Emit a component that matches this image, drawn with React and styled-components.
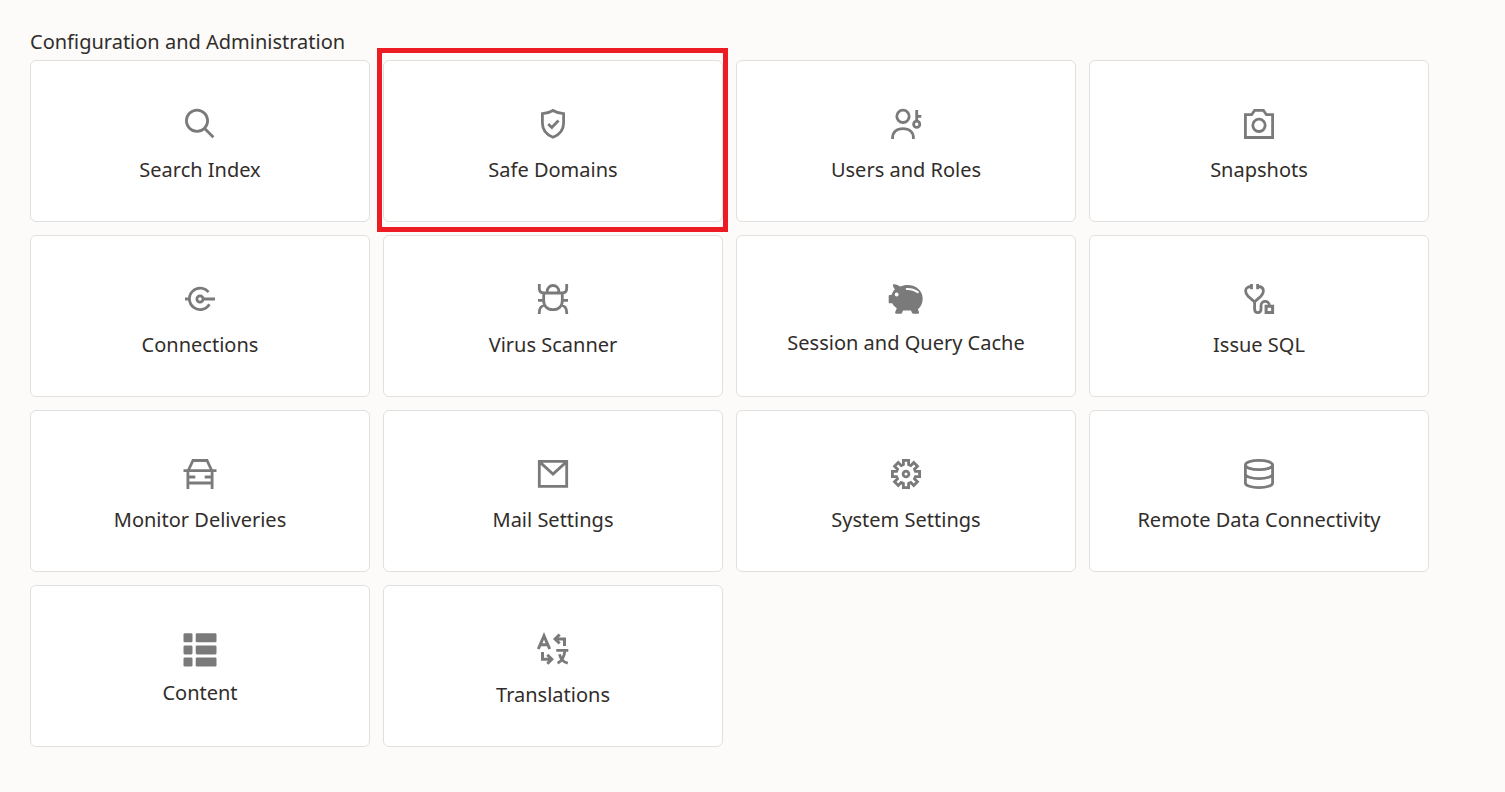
import React from "react";
import styled, { createGlobalStyle } from "styled-components";

const GlobalStyle = createGlobalStyle`
  body {
    margin: 0;
    background: #fcfbfa;
    color: #312d2a;
    font-family: "Noto Sans", "Open Sans", sans-serif;
    font-size: 20px;
    line-height: 28px;
  }
`;

const Page = styled.main`
  padding: 28px 30px 45px;
`;

const Heading = styled.h1`
  margin: 0 0 4px;
  font-size: 20px;
  font-weight: 400;
  line-height: 28px;
`;

const TileGrid = styled.nav`
  display: grid;
  grid-template-columns: repeat(auto-fill, 340px);
  grid-auto-rows: 162px;
  gap: 13px;
`;

const Tile = styled.a`
  position: relative;
  display: flex;
  flex-direction: column;
  align-items: center;
  gap: ${(p) => (p.$compact ? "12px" : "14px")};
  box-sizing: border-box;
  padding: 45px 8px 0;
  border: 1px solid #e2e0de;
  border-radius: 6px;
  background: #fff;
  color: inherit;
  text-decoration: none;
`;

const TileLabel = styled.span`
  white-space: nowrap;
`;

const Highlight = styled.span`
  position: absolute;
  inset: -13px -6px -11px -7px;
  border: 5px solid #ed1c24;
  pointer-events: none;
`;

const Icon = styled.svg`
  flex: none;
  width: 36px;
  height: 36px;
  fill: none;
  stroke: #7a7a7a;
  stroke-width: 2.8;
`;

const gearPoints = Array.from({ length: 8 }, (_, i) => {
  const a = (i * Math.PI) / 4;
  return [[-2.6, -9.4], [-2.6, -13.6], [2.6, -13.6], [2.6, -9.4]]
    .map(([x, y]) => {
      const px = 18 + x * Math.cos(a) - y * Math.sin(a);
      const py = 18 + x * Math.sin(a) + y * Math.cos(a);
      return `${px.toFixed(2)},${py.toFixed(2)}`;
    })
    .join(" ");
}).join(" ");

const icons = {
  search: (
    <>
      <circle cx="15" cy="14.8" r="10.6" />
      <path d="M22.6 22.4l8.8 8.8" />
    </>
  ),
  shield: (
    <>
      <path d="M18 4.5c3.3 2 7 3 10.6 3.200V17c0 7-4.100 11.700-10.600 14.300C11.500 28.700 7.400 24 7.400 17V7.700C11 7.500 14.700 6.500 18 4.500z" />
      <path d="M13.200 18l3.600 3.500 6.700-7" />
    </>
  ),
  users: (
    <>
      <circle cx="15" cy="10.300" r="6.200" />
      <path d="M4.600 33v-1c0-6 4.300-9.400 10.400-9.400S25.400 26 25.400 32v1" />
      <circle cx="28.700" cy="18.300" r="3.100" />
      <path d="M28.700 15.200V4M28.700 10.300H33.300" />
    </>
  ),
  camera: (
    <>
      <path d="M4.400 8.700h6.200l3-4.300h8.800l3 4.300h6.200v22.800H4.400z" />
      <circle cx="18" cy="19.300" r="6.200" />
    </>
  ),
  connection: (
    <>
      <path d="M26.500 11.200a10.700 10.700 0 1 0 .9 12M3 18h4.300M21.200 18H33" />
      <circle cx="18" cy="18" r="3.100" />
    </>
  ),
  bug: (
    <path d="M7.500 12h21M8.700 12v7.500c0 5.600 3.600 9.100 9.300 9.100s9.300-3.500 9.300-9.100V12M12.200 12v-1.500c0-3.600 2.400-6 5.800-6s5.800 2.400 5.800 6V12M4.300 3v4.500c0 2.700 1.400 4.300 4.300 4.500M31.700 3v4.500c0 2.700-1.400 4.300-4.300 4.500M3 19.300h5.500M27.500 19.300H33M4.300 33v-1.500c0-4 2-6.700 5.400-7.500M31.700 33v-1.500c0-4-2-6.700-5.400-7.500" />
  ),
  piggy: (
    <>
      <path
        d="M5.300 3.200c-.7.500-.3 3.300 1.600 5-1.600 1.600-2.700 3.500-3.400 5.800H1.600c-.6 0-.9.400-.9 1v6.400c0 .6.300.9.900.9h2.600c1 2 2.500 3.500 4.600 4.900L7.200 31c-.3 1 .2 1.700 1.200 1.700h4.400c.8 0 1.200-.4 1.500-1.200l.7-1.900h8l.8 2c.3.800.7 1.100 1.500 1.100h4.500c1 0 1.500-.7 1.100-1.700l-1-2.800c3-2.500 4.800-6.200 4.800-10.500C34.700 9.800 28.500 4 19.500 4c-2.700 0-5.200.5-7.500 1.600-1.500-1.500-4-2.700-6.700-2.400z"
        fill="#7a7a7a"
        stroke="none"
      />
      <circle cx="8.700" cy="13.500" r="1.900" fill="#fff" stroke="none" />
      <path d="M18.800 8c4.400-.1 7.800.9 10.900 3.200" stroke="#fff" strokeWidth="2.200" strokeLinecap="round" />
    </>
  ),
  stethoscope: (
    <>
      <path d="M10.500 3v5.200M16.600 3v5.200M10.300 5.500C6.500 5.500 4.600 7.300 4.600 10c0 2 .9 3.500 2.500 5.200l6.400 5.600 6.400-5.600c1.600-1.700 2.500-3.200 2.500-5.200 0-2.700-2-4.500-5.700-4.500M13.600 20.600v7.600c0 4.500 6.400 4.500 6.400 0v-3.400c0-5.800 8.400-5.800 8.400 0" />
      <path d="M25.100 25.300h6.500v6.200h-6.500z" strokeWidth="3" />
    </>
  ),
  car: (
    <>
      <path d="M6.300 14.500l4.700-10h14l4.700 10" />
      <path d="M10.500 4.500h15" strokeWidth="3" />
      <path d="M1.500 14.700h33M5.900 14.700V33M30.100 14.700V33M5.900 21h7.400M22.700 21h7.400M5.900 27h24.200" />
    </>
  ),
  mail: (
    <path d="M4.300 5.400h27.400v25H4.300zM4.300 5.600L18 18l13.700-12.400" />
  ),
  gear: (
    <>
      <polygon points={gearPoints} />
      <circle cx="18" cy="18" r="2.900" />
    </>
  ),
  database: (
    <>
      <ellipse cx="18" cy="9" rx="13.600" ry="4.700" />
      <path d="M4.400 9v18c0 2.600 6 4.600 13.600 4.600s13.600-2 13.600-4.600V9M4.400 18c0 2.600 6 4.600 13.600 4.600s13.600-2 13.600-4.600" />
    </>
  ),
  content: (
    <g fill="#7a7a7a" stroke="none">
      {[2.3, 14.400, 26.500].map((y) => (
        <React.Fragment key={y}>
          <rect x="1.500" y={y} width="9" height="9" rx="1.300" />
          <rect x="13.700" y={y} width="20.800" height="9" rx="1.300" />
        </React.Fragment>
      ))}
    </g>
  ),
  translate: (
    <>
      <path d="M3.300 18L9 4.800 14.700 18M5.200 13.700h7.600" strokeWidth="3" />
      <path d="M29.500 15V8H20.500M24.600 3.500L20.100 8l4.500 4.500M7.500 21v7.300H16.500M12.300 23.800l4.500 4.500-4.500 4.500" strokeWidth="3" />
      <path d="M21.300 19.400H33.300M30 19.400C29.400 25.500 27 30 22.600 32.200M24.500 23.200c1 4.500 3.700 7.800 8.300 9" />
    </>
  ),
};

const tiles = [
  { icon: "search", label: "Search Index" },
  { icon: "shield", label: "Safe Domains", highlighted: true },
  { icon: "users", label: "Users and Roles" },
  { icon: "camera", label: "Snapshots" },
  { icon: "connection", label: "Connections" },
  { icon: "bug", label: "Virus Scanner" },
  { icon: "piggy", label: "Session and Query Cache", compact: true },
  { icon: "stethoscope", label: "Issue SQL" },
  { icon: "car", label: "Monitor Deliveries" },
  { icon: "mail", label: "Mail Settings" },
  { icon: "gear", label: "System Settings" },
  { icon: "database", label: "Remote Data Connectivity" },
  { icon: "content", label: "Content", compact: true },
  { icon: "translate", label: "Translations" },
];

export default function App() {
  return (
    <>
      <GlobalStyle />
      <Page>
        <Heading>Configuration and Administration</Heading>
        <TileGrid aria-label="Configuration and Administration">
          {tiles.map((t) => (
            <Tile key={t.label} href="#" $compact={t.compact}>
              <Icon viewBox="0 0 36 36" aria-hidden="true">
                {icons[t.icon]}
              </Icon>
              <TileLabel>{t.label}</TileLabel>
              {t.highlighted && <Highlight />}
            </Tile>
          ))}
        </TileGrid>
      </Page>
    </>
  );
}
